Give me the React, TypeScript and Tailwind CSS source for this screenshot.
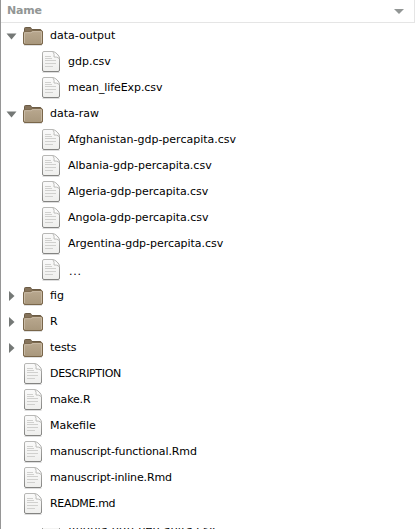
import React from "react";

type Item = { name: string; kind: "open" | "closed" | "file"; nested?: boolean; tracking?: string };

const items: Item[] = [
  { name: "data-output", kind: "open" },
  { name: "gdp.csv", kind: "file", nested: true },
  { name: "mean_lifeExp.csv", kind: "file", nested: true, tracking: "tracking-[-0.08px]" },
  { name: "data-raw", kind: "open" },
  { name: "Afghanistan-gdp-percapita.csv", kind: "file", nested: true },
  { name: "Albania-gdp-percapita.csv", kind: "file", nested: true },
  { name: "Algeria-gdp-percapita.csv", kind: "file", nested: true, tracking: "tracking-[-0.04px]" },
  { name: "Angola-gdp-percapita.csv", kind: "file", nested: true },
  { name: "Argentina-gdp-percapita.csv", kind: "file", nested: true, tracking: "tracking-[-0.04px]" },
  { name: "...", kind: "file", nested: true, tracking: "tracking-[0.8px] pl-px pt-1" },
  { name: "fig", kind: "closed" },
  { name: "R", kind: "closed" },
  { name: "tests", kind: "closed", tracking: "tracking-[-0.1px]" },
  { name: "DESCRIPTION", kind: "file", tracking: "tracking-[-0.32px]" },
  { name: "make.R", kind: "file", tracking: "tracking-[-0.15px]" },
  { name: "Makefile", kind: "file" },
  { name: "manuscript-functional.Rmd", kind: "file", tracking: "tracking-[-0.11px]" },
  { name: "manuscript-inline.Rmd", kind: "file", tracking: "tracking-[-0.14px]" },
  { name: "README.md", kind: "file", tracking: "tracking-[-0.33px]" },
];

function FolderIcon() {
  return (
    <svg width="22" height="20" viewBox="0 0 22 20" className="shrink-0">
      <defs>
        <linearGradient id="folder" x1="0" y1="0" x2="0" y2="1">
          <stop offset="0" stopColor="#b9a88f" />
          <stop offset="1" stopColor="#a8977c" />
        </linearGradient>
      </defs>
      <path d="M2 19.2H20" stroke="#000" strokeOpacity=".18" />
      <path d="M2.5 17V2.5Q2.5 1.5 3.5 1.5H8.2Q9 1.5 9.3 2.5L9.7 3.5H18Q19.5 3.5 19.5 5V17Z" fill="#85735b" stroke="#6b5b45" />
      <path d="M1.5 6.5Q1.5 5.7 2.5 5.7H8.5L10.5 4.6H19.3Q20.5 4.6 20.5 6V17Q20.5 18.5 19 18.5H3Q1.5 18.5 1.5 17Z" fill="url(#folder)" stroke="#79664a" />
      <path d="M2.5 17V7.2Q2.5 6.7 3.2 6.7H8.8L10.8 5.6H18.8Q19.5 5.6 19.5 6.3V17" fill="none" stroke="#d4c8b5" strokeOpacity=".65" />
    </svg>
  );
}

function FileIcon() {
  return (
    <svg width="20" height="22" viewBox="0 0 20 22" className="shrink-0">
      <defs>
        <linearGradient id="paper" x1="0" y1="0" x2="0" y2="1">
          <stop offset="0" stopColor="#fafafa" />
          <stop offset="1" stopColor="#efefed" />
        </linearGradient>
        <linearGradient id="edge" x1="0" y1="0" x2="0" y2="1">
          <stop offset="0" stopColor="#b8b8b6" />
          <stop offset="1" stopColor="#838381" />
        </linearGradient>
      </defs>
      <path d="M1.5 21.4H18.5" stroke="#000" strokeOpacity=".15" />
      <path d="M3 .5H12Q14 .8 16.2 3Q18.5 5.3 18.5 7.3V19Q18.5 20.5 17 20.5H3Q1.5 20.5 1.5 19V2Q1.5 .5 3 .5Z" fill="url(#paper)" stroke="url(#edge)" />
      <path d="M12 1Q13.7 3 13 6Q16.2 5.5 18 7.5" fill="#fff" stroke="#bcbcb9" />
      <path d="M4 5.5H10M4 7.5H11M4 9.5H15M4 12.5H15M4 15.5H12" stroke="#d0d0ce" />
    </svg>
  );
}

function Row({ item }: { item: Item }) {
  return (
    <li className={`flex h-[26px] shrink-0 items-center ${item.nested ? "pl-10" : "pl-[5px]"}`}>
      {!item.nested && (
        <span className={`flex shrink-0 ${item.kind === "file" ? "w-[17px]" : "w-4"}`}>
          {item.kind === "open" && (
            <svg width="12" height="8" viewBox="0 0 12 8"><path d="M.5 1.5H10.5L5.5 7.5Z" fill="#747876" /></svg>
          )}
          {item.kind === "closed" && (
            <svg width="10" height="12" viewBox="0 0 10 12" className="ml-[2px]"><path d="M1 1V11L6.5 6Z" fill="#747876" /></svg>
          )}
        </span>
      )}
      {item.kind === "file" ? <FileIcon /> : <FolderIcon />}
      <span className={`whitespace-pre leading-[14px] ${item.kind === "file" ? "ml-[7px]" : "ml-[6px]"} ${item.tracking ?? ""}`}>{item.name}</span>
    </li>
  );
}

export default function App() {
  return (
    <main className="flex h-[529px] w-[415px] flex-col overflow-hidden border-l border-[#969696] bg-white font-['DejaVu_Sans',sans-serif] text-[11px] text-black">
      <header className="flex h-[23px] shrink-0 items-center justify-between border-r border-b border-[#e5e5e5] pr-[9px] pl-[6px] font-bold text-[#929695]">
        <span className="leading-[14px] tracking-[-0.2px]">Name</span>
        <svg width="12" height="7" viewBox="0 0 12 7"><path d="M1 1H11L6 6Z" fill="#929695" /></svg>
      </header>
      <ul className="flex flex-col">
        {items.map((item) => <Row key={item.name} item={item} />)}
      </ul>
      {/* The next row, scrolled so that only a thin slice of it shows. */}
      <div className="mt-[11px] flex h-px shrink-0 items-center overflow-hidden pl-10">
        <FileIcon />
        <span className="ml-[7px] leading-[14px] tracking-[0.3px]">Angola-gdp-percapita.csv</span>
      </div>
    </main>
  );
}
